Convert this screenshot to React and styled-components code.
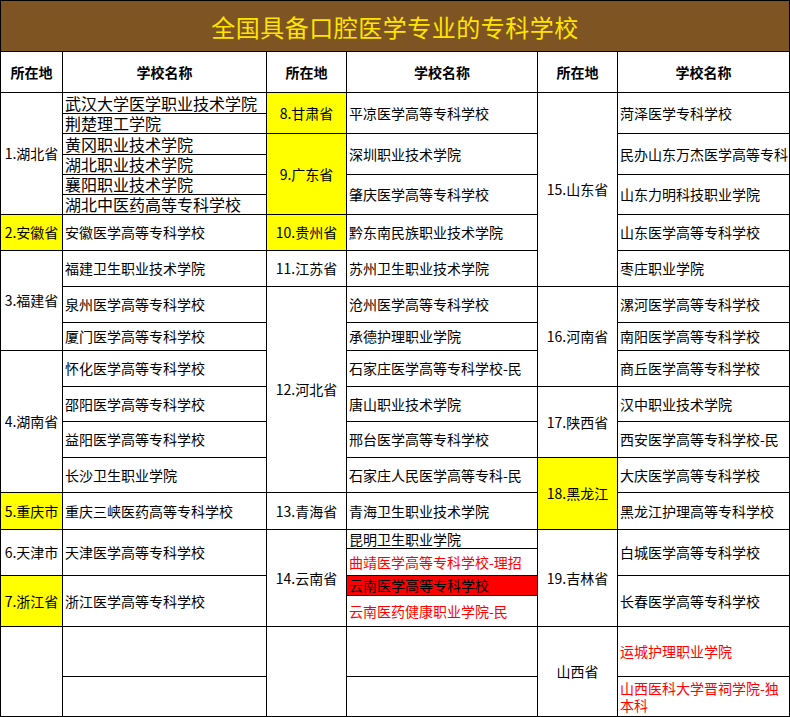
import styled, { createGlobalStyle } from "styled-components";

const Global = createGlobalStyle`
  body { margin: 0; background: #fff; }
`;

// horizontal lines of the table (grid lines 1..23)
const tracks = [41, 21, 20, 21, 20, 20, 20, 36, 36, 36, 28, 36, 35, 36, 35, 37, 19, 27, 20, 31, 50, 40];

// [col, rowStart, rowEnd, text, variant]
const cells = [
  [1, 1, 2, "所在地", "head"], [2, 1, 2, "学校名称", "head"], [3, 1, 2, "所在地", "head"],
  [4, 1, 2, "学校名称", "head"], [5, 1, 2, "所在地", "head"], [6, 1, 2, "学校名称", "head"],

  [1, 2, 8, "1.湖北省", "prov"],
  [1, 8, 9, "2.安徽省", "yellow"],
  [1, 9, 12, "3.福建省", "prov"],
  [1, 12, 16, "4.湖南省", "prov"],
  [1, 16, 17, "5.重庆市", "yellow"],
  [1, 17, 19, "6.天津市", "prov"],
  [1, 19, 21, "7.浙江省", "yellow"],
  [1, 21, 23, "", "prov"],

  [2, 2, 3, "武汉大学医学职业技术学院", "big"],
  [2, 3, 4, "荆楚理工学院", "big"],
  [2, 4, 5, "黄冈职业技术学院", "big"],
  [2, 5, 6, "湖北职业技术学院", "big"],
  [2, 6, 7, "襄阳职业技术学院", "big"],
  [2, 7, 8, "湖北中医药高等专科学校", "big"],
  [2, 8, 9, "安徽医学高等专科学校"],
  [2, 9, 10, "福建卫生职业技术学院"],
  [2, 10, 11, "泉州医学高等专科学校"],
  [2, 11, 12, "厦门医学高等专科学校"],
  [2, 12, 13, "怀化医学高等专科学校"],
  [2, 13, 14, "邵阳医学高等专科学校"],
  [2, 14, 15, "益阳医学高等专科学校"],
  [2, 15, 16, "长沙卫生职业学院"],
  [2, 16, 17, "重庆三峡医药高等专科学校"],
  [2, 17, 19, "天津医学高等专科学校"],
  [2, 19, 21, "浙江医学高等专科学校"],
  [2, 21, 22, ""],
  [2, 22, 23, ""],

  [3, 2, 4, "8.甘肃省", "yellow"],
  [3, 4, 8, "9.广东省", "yellow"],
  [3, 8, 9, "10.贵州省", "yellow"],
  [3, 9, 10, "11.江苏省", "prov"],
  [3, 10, 16, "12.河北省", "prov"],
  [3, 16, 17, "13.青海省", "prov"],
  [3, 17, 21, "14.云南省", "prov"],
  [3, 21, 23, "", "prov"],

  [4, 2, 4, "平凉医学高等专科学校"],
  [4, 4, 6, "深圳职业技术学院"],
  [4, 6, 8, "肇庆医学高等专科学校"],
  [4, 8, 9, "黔东南民族职业技术学院"],
  [4, 9, 10, "苏州卫生职业技术学院"],
  [4, 10, 11, "沧州医学高等专科学校"],
  [4, 11, 12, "承德护理职业学院"],
  [4, 12, 13, "石家庄医学高等专科学校-民"],
  [4, 13, 14, "唐山职业技术学院"],
  [4, 14, 15, "邢台医学高等专科学校"],
  [4, 15, 16, "石家庄人民医学高等专科-民"],
  [4, 16, 17, "青海卫生职业技术学院"],
  [4, 17, 18, "昆明卫生职业学院"],
  [4, 18, 19, "曲靖医学高等专科学校-理招", "red"],
  [4, 19, 20, "云南医学高等专科学校", "redbg"],
  [4, 20, 21, "云南医药健康职业学院-民", "red"],
  [4, 21, 22, ""],
  [4, 22, 23, ""],

  [5, 2, 10, "15.山东省", "prov"],
  [5, 10, 13, "16.河南省", "prov"],
  [5, 13, 15, "17.陕西省", "prov"],
  [5, 15, 17, "18.黑龙江", "yellow"],
  [5, 17, 21, "19.吉林省", "prov"],
  [5, 21, 23, "山西省", "prov"],

  [6, 2, 4, "菏泽医学专科学校"],
  [6, 4, 6, "民办山东万杰医学高等专科"],
  [6, 6, 8, "山东力明科技职业学院"],
  [6, 8, 9, "山东医学高等专科学校"],
  [6, 9, 10, "枣庄职业学院"],
  [6, 10, 11, "漯河医学高等专科学校"],
  [6, 11, 12, "南阳医学高等专科学校"],
  [6, 12, 13, "商丘医学高等专科学校"],
  [6, 13, 14, "汉中职业技术学院"],
  [6, 14, 15, "西安医学高等专科学校-民"],
  [6, 15, 16, "大庆医学高等专科学校"],
  [6, 16, 17, "黑龙江护理高等专科学校"],
  [6, 17, 19, "白城医学高等专科学校"],
  [6, 19, 21, "长春医学高等专科学校"],
  [6, 21, 22, "运城护理职业学院", "red"],
  [6, 22, 23, "山西医科大学晋祠学院-独本科", "red"],
];

export default function App() {
  return (
    <>
      <Global />
      <Styled.Page>
        <Styled.Title>全国具备口腔医学专业的专科学校</Styled.Title>
        <Styled.Grid>
          {cells.map(([col, r1, r2, text, variant], i) => (
            <Styled.Cell
              key={i}
              $variant={variant || "school"}
              style={{ gridColumn: col, gridRow: `${r1} / ${r2}` }}
            >
              {text}
            </Styled.Cell>
          ))}
        </Styled.Grid>
      </Styled.Page>
    </>
  );
}

const bg = { yellow: "#ffff00", redbg: "#ff0000", head: "#fff" };

const Styled = {
  Page: styled.div`
    width: 790px;
    font-family: "Noto Sans CJK SC", "Liberation Sans", sans-serif;
    color: #000;
  `,

  Title: styled.div`
    height: 50px;
    border: 1px solid #000;
    background: #7e5422;
    color: #ffe400;
    font-size: 24px;
    display: flex;
    align-items: center;
    justify-content: center;
    letter-spacing: 0.5px;
  `,

  Grid: styled.div`
    display: grid;
    grid-template-columns: 61px 203px 79px 190px 79px 171px;
    grid-template-rows: ${tracks.map((t) => `${t - 1}px`).join(" ")};
    gap: 1px;
    padding: 0 1px 1px 1px;
    background: #000;
  `,

  Cell: styled.div`
    background: ${(p) => bg[p.$variant] || "#fff"};
    color: ${(p) => (p.$variant === "red" ? "#ff0000" : "#000")};
    display: flex;
    align-items: center;
    justify-content: ${(p) =>
      ["prov", "yellow", "head"].includes(p.$variant) ? "center" : "flex-start"};
    padding: 0 2px;
    font-size: ${(p) => (p.$variant === "big" ? "16px" : "14px")};
    font-weight: ${(p) => (p.$variant === "head" ? 700 : 400)};
    line-height: ${(p) => (p.$variant === "big" ? "19px" : "17px")};
    white-space: ${(p) => (p.$variant === "red" ? "normal" : "nowrap")};
    overflow: hidden;
  `,
};
